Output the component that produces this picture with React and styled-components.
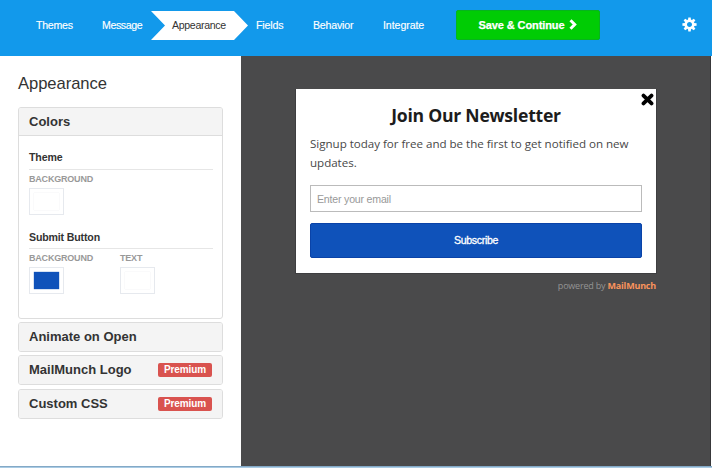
import React from 'react';
import styled, { createGlobalStyle } from 'styled-components';

const GlobalStyle = createGlobalStyle`
  * { box-sizing: border-box; }
  body {
    margin: 0;
    background: #fff;
    color: #333;
    font-family: "Liberation Sans", Arial, sans-serif;
    overflow: hidden;
  }
`;

const Page = styled.div`
  width: 712px;
  height: 468px;
  display: flex;
  flex-direction: column;
`;

const Header = styled.header`
  height: 56px;
  flex: none;
  display: flex;
  align-items: flex-start;
  background: #1299eb;
  padding: 10px 15px 0 21px;
`;

const Nav = styled.nav`
  display: flex;
  padding-top: 1px;
`;

const NavItem = styled.a`
  width: ${(p) => p.$width}px;
  height: 29px;
  padding-left: 15px;
  font-size: 10.6px;
  line-height: 28px;
  white-space: nowrap;
  letter-spacing: ${(p) => p.$spacing || 0}px;
  color: ${(p) => (p.$active ? '#333' : '#fff')};
  -webkit-text-stroke: ${(p) => (p.$active ? 0 : '0.15px #fff')};
  ${(p) =>
    p.$active &&
    `
    width: 97px;
    margin: 0 -7px 0 -6px;
    padding-left: 21px;
    background: #fff;
    clip-path: polygon(0 0, 83px 0, 97px 14.5px, 83px 100%, 0 100%, 14px 14.5px);
  `}
`;

const SaveButton = styled.button`
  width: 144px;
  height: 30px;
  margin-left: 17px;
  padding: 0 0 1px;
  display: flex;
  align-items: center;
  justify-content: center;
  gap: 5px;
  border: 1px solid #06b51c;
  border-radius: 2px;
  background: #00cc04;
  color: #fff;
  font: bold 11px "Liberation Sans", Arial, sans-serif;
  letter-spacing: -0.1px;
  -webkit-text-stroke: 0.25px #fff;
`;

const SettingsLink = styled.a`
  display: block;
  margin: 7px 0 0 auto;
  width: 15px;
  height: 15px;
  svg { display: block; }
`;

const Main = styled.main`
  flex: 1;
  min-height: 0;
  display: flex;
`;

const Sidebar = styled.aside`
  width: 241px;
  padding: 17px 18px 0;
`;

const Title = styled.h1`
  margin: 0 0 13px;
  font-size: 16.6px;
  line-height: 21px;
  font-weight: normal;
  letter-spacing: -0.06px;
`;

const Panel = styled.section`
  border: 1px solid #ddd;
  border-radius: 3px;
  margin-bottom: ${(p) => p.$gap}px;
  overflow: hidden;
`;

const PanelHead = styled.h2`
  height: ${(p) => p.$height || 28}px;
  margin: 0;
  padding: 0 10px 1px;
  display: flex;
  align-items: center;
  justify-content: space-between;
  background: #f4f4f4;
  font-size: 13px;
  line-height: 15px;
`;

const PanelBody = styled.div`
  height: 183px;
  border-top: 1px solid #ddd;
  padding: 13px 9px 0 10px;
`;

const Badge = styled.span`
  width: 54px;
  height: 14px;
  border-radius: 2px;
  background: #d9534f;
  color: #fff;
  font-size: 10px;
  line-height: 13px;
  text-align: center;
  letter-spacing: -0.1px;
`;

const Group = styled.div`
  height: 79px;
`;

const GroupTitle = styled.h3`
  height: 21px;
  margin: 0 0 3px;
  border-bottom: 1px solid #e6e6e6;
  font-size: 10.6px;
  line-height: ${(p) => p.$line}px;
  letter-spacing: -0.15px;
`;

const Swatches = styled.div`
  display: grid;
  grid-template-columns: 91px 1fr;
`;

const SwatchLabel = styled.div`
  height: 15px;
  color: #999;
  font-size: 9px;
  line-height: 13px;
  font-weight: bold;
  letter-spacing: -0.2px;
`;

const Swatch = styled.div`
  width: 35px;
  height: 27px;
  padding: 4px;
  border: 1px solid #e6e9ee;
  background: #fff;
  &::before {
    content: "";
    display: block;
    width: 25px;
    height: 17px;
    background: ${(p) => p.$color};
    box-shadow: 0 0 1px ${(p) => p.$edge};
  }
`;

const Preview = styled.div`
  width: 470px;
  background: #4a4a4b;
  border-right: 1px solid #38383a;
  padding: 33px 0 0 54px;
  margin-right: 1px;
`;

const Popup = styled.form`
  position: relative;
  width: 362px;
  height: 185px;
  border: 1px solid #3e3e40;
  border-width: 0 1px 1px 1px;
  background: #fff;
  padding: 14px 14px 0;
`;

const Close = styled.a`
  position: absolute;
  top: 4px;
  right: 2px;
  width: 13px;
  height: 13px;
  svg { display: block; }
`;

const PopupTitle = styled.h2`
  margin: 0 0 6px;
  font: bold 17.6px/25px "Open Sans", sans-serif;
  letter-spacing: -0.24px;
  text-align: center;
  color: #1c1c1c;
`;

const PopupText = styled.p`
  margin: 0 0 13px;
  width: 332px;
  font: 11.6px/19px "Open Sans", sans-serif;
  letter-spacing: -0.03px;
  color: #484848;
  white-space: pre-line;
`;

const EmailInput = styled.input`
  display: block;
  width: 332px;
  height: 27px;
  margin: 0 0 11px;
  padding: 0 6px;
  border: 1px solid #bbb;
  background: #fff;
  font: 10.6px "Liberation Sans", Arial, sans-serif;
  letter-spacing: -0.2px;
  &::placeholder { color: #999; opacity: 1; }
`;

const Subscribe = styled.button`
  display: block;
  width: 332px;
  height: 35px;
  padding: 0 0 1px;
  border: 1px solid #0a43a8;
  border-radius: 2px;
  background: #0f52ba;
  color: #fff;
  font: 10.6px "Liberation Sans", Arial, sans-serif;
  letter-spacing: -0.35px;
  -webkit-text-stroke: 0.3px #fff;
`;

const Powered = styled.div`
  width: 361px;
  padding-top: 5px;
  text-align: right;
  color: #949494;
  font: 9px/14px "Open Sans", sans-serif;
  letter-spacing: -0.2px;
  b { color: #f9935c; }
`;

const BottomEdge = styled.footer`
  height: 2px;
  flex: none;
  background: #a9cbe4;
  border-top: 1px solid #84a9c6;
`;

const TEETH = [0, 45, 90, 135, 180, 225, 270, 315];

function Gear() {
  return (
    <svg width="15" height="15" viewBox="-7.5 -7.5 15 15" fill="#fff">
      <circle r="3.8" fill="none" stroke="#fff" strokeWidth="2.6" />
      {TEETH.map((a) => (
        <path key={a} d="M-1.5 -4.5L-1.2 -7.1H1.2L1.5 -4.5Z" transform={`rotate(${a})`} />
      ))}
    </svg>
  );
}

function Chevron() {
  return (
    <svg width="8" height="11" viewBox="0 0 8 11">
      <path d="M1.5 1.3L5.7 5.5L1.5 9.7" fill="none" stroke="#fff" strokeWidth="3" />
    </svg>
  );
}

function Cross() {
  return (
    <svg width="13" height="13" viewBox="0 0 13 13">
      <path d="M2.5 2.6L10.5 10.4M10.5 2.6L2.5 10.4" stroke="#000" strokeWidth="3.8" strokeLinecap="round" />
    </svg>
  );
}

const steps = [
  { label: 'Themes', width: 66, spacing: -0.25 },
  { label: 'Message', width: 70, spacing: -0.4 },
  { label: 'Appearance', width: 84, spacing: -0.33, active: true },
  { label: 'Fields', width: 57, spacing: -0.15 },
  { label: 'Behavior', width: 70, spacing: -0.2 },
  { label: 'Integrate', width: 71, spacing: -0.07 },
];

function ColorField({ label, color, edge = '#dfe2e8' }) {
  return (
    <div>
      <SwatchLabel>{label}</SwatchLabel>
      <Swatch $color={color} $edge={edge} />
    </div>
  );
}

export default function App() {
  return (
    <Page>
      <GlobalStyle />
      <Header>
        <Nav>
          {steps.map((s) => (
            <NavItem key={s.label} $width={s.width} $spacing={s.spacing} $active={s.active}>
              {s.label}
            </NavItem>
          ))}
        </Nav>
        <SaveButton>
          Save &amp; Continue
          <Chevron />
        </SaveButton>
        <SettingsLink>
          <Gear />
        </SettingsLink>
      </Header>
      <Main>
        <Sidebar>
          <Title>Appearance</Title>
          <Panel $gap={3}>
            <PanelHead $height={27}>Colors</PanelHead>
            <PanelBody>
              <Group>
                <GroupTitle $line={17}>Theme</GroupTitle>
                <Swatches>
                  <ColorField label="BACKGROUND" color="#fff" />
                </Swatches>
              </Group>
              <Group>
                <GroupTitle $line={19}>Submit Button</GroupTitle>
                <Swatches>
                  <ColorField label="BACKGROUND" color="#0f52ba" edge="#0f52ba" />
                  <ColorField label="TEXT" color="#fff" />
                </Swatches>
              </Group>
            </PanelBody>
          </Panel>
          <Panel $gap={3}>
            <PanelHead>Animate on Open</PanelHead>
          </Panel>
          <Panel $gap={4}>
            <PanelHead>
              MailMunch Logo <Badge>Premium</Badge>
            </PanelHead>
          </Panel>
          <Panel $gap={0}>
            <PanelHead>
              Custom CSS <Badge>Premium</Badge>
            </PanelHead>
          </Panel>
        </Sidebar>
        <Preview>
          <Popup>
            <Close>
              <Cross />
            </Close>
            <PopupTitle>Join Our Newsletter</PopupTitle>
            <PopupText>{'Signup today for free and be the first to get notified on new\nupdates.'}</PopupText>
            <EmailInput placeholder="Enter your email" />
            <Subscribe type="button">Subscribe</Subscribe>
          </Popup>
          <Powered>
            powered by <b>MailMunch</b>
          </Powered>
        </Preview>
      </Main>
      <BottomEdge />
    </Page>
  );
}
